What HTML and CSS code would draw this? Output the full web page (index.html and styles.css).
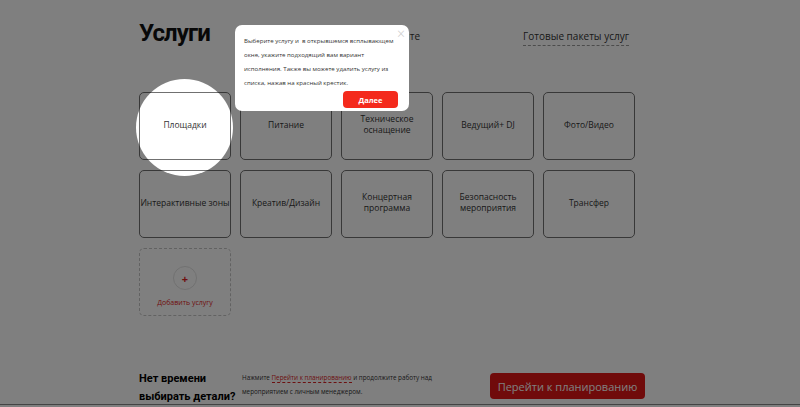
FILE: index.html
```html
<!DOCTYPE html>
<html lang="ru">
<head>
<meta charset="utf-8">
<link rel="stylesheet" href="styles.css">
</head>
<body>
<div class="page">
  <header class="header">
    <h1 class="title">Услуги</h1>
    <nav class="tabs">
      <span class="tab">Выбрать на сайте</span>
      <span class="tab tab-dashed">Готовые пакеты услуг</span>
    </nav>
  </header>
  <section class="grid">
    <div class="card">Площадки</div>
    <div class="card">Питание</div>
    <div class="card">Техническое<br>оснащение</div>
    <div class="card">Ведущий+ DJ</div>
    <div class="card">Фото/Видео</div>
    <div class="card">Интерактивные зоны</div>
    <div class="card">Креатив/Дизайн</div>
    <div class="card">Концертная<br>программа</div>
    <div class="card">Безопасность<br>мероприятия</div>
    <div class="card">Трансфер</div>
    <div class="card card-add">
      <span class="plus">+</span>
      <span class="add-text">Добавить услугу</span>
    </div>
  </section>
  <footer class="footer">
    <div class="question">Нет времени<br>выбирать детали?</div>
    <p class="hint">Нажмите <a class="link">Перейти к планированию</a> и продолжите работу над мероприятием с личным менеджером.</p>
    <button class="cta">Перейти к планированию</button>
  </footer>
  <div class="bottom-line"></div>
</div>
<div class="spotlight"></div>
<div class="tooltip">
  <span class="close">×</span>
  <p class="tip-text">Выберите услугу и&nbsp; в открывшемся всплывающем окне, укажите подходящий вам вариант исполнения. Также вы можете удалить услугу из списка, нажав на красный крестик.</p>
  <div class="tip-actions"><button class="next">Далее</button></div>
</div>
</body>
</html>
```
FILE: styles.css
```css
* { box-sizing: border-box; }
html, body { margin: 0; padding: 0; }
body {
  width: 800px;
  height: 407px;
  overflow: hidden;
  background: #fff;
  font-family: "Open Sans", "Noto Sans", sans-serif;
  color: #3a3a3a;
  position: relative;
}
.page {
  padding: 17px 0 0 139px;
  width: 800px;
  height: 407px;
}
.header {
  display: flex;
  align-items: flex-start;
  width: 490px;
  height: 75px;
}
.title {
  margin: 0;
  font-family: Roboto, sans-serif;
  font-weight: 700;
  font-size: 24px;
  letter-spacing: -0.9px;
  color: #111;
  line-height: 32px;
}
.tabs {
  display: flex;
  margin-left: auto;
  gap: 103px;
  padding-top: 12px;
  font-size: 10px;
  color: #333;
}
.tab { line-height: 15px; white-space: nowrap; }
.tab-dashed {
  border-bottom: 1px dashed #999;
  padding-bottom: 1px;
}
.grid {
  display: grid;
  grid-template-columns: repeat(5, 92px);
  grid-auto-rows: 68px;
  gap: 10px 9px;
}
.card {
  border: 1px solid #707070;
  border-radius: 5px;
  display: flex;
  align-items: center;
  justify-content: center;
  text-align: center;
  font-size: 8.5px;
  line-height: 11px;
  color: #333;
  white-space: nowrap;
  padding-bottom: 4px;
}
.card-add {
  border: 1px dashed #c4c4c4;
  flex-direction: column;
  gap: 7px;
  padding: 10px 0 0 0;
}
.plus {
  width: 24px;
  height: 24px;
  border-radius: 50%;
  border: 1px solid #e2e2e2;
  display: flex;
  align-items: center;
  justify-content: center;
  color: #e02020;
  font-size: 11px;
  font-weight: 700;
}
.add-text { color: #e02020; font-size: 7px; }
.footer {
  display: flex;
  align-items: flex-start;
  margin-top: 54px;
  width: 506px;
}
.question {
  width: 103px;
  font-family: Roboto, sans-serif;
  font-weight: 700;
  font-size: 11px;
  line-height: 18px;
  color: #000;
}
.hint {
  margin: 1px 0 0 0;
  width: 225px;
  font-size: 6.3px;
  line-height: 14px;
  color: #333;
}
.link {
  color: #d92323;
  border-bottom: 1px dashed #d92323;
}
.cta {
  margin-left: auto;
  margin-top: 3px;
  width: 155px;
  height: 26px;
  border: 0;
  border-radius: 4px;
  background: #e01616;
  color: #fff;
  font-family: "Open Sans", sans-serif;
  font-size: 11px;
}
.bottom-line {
  position: absolute;
  left: 0;
  right: 0;
  top: 404px;
  border-top: 1px solid #888;
}
.spotlight {
  position: absolute;
  left: 136px;
  top: 79px;
  width: 97px;
  height: 97px;
  border-radius: 50%;
  box-shadow: 0 0 0 1200px rgba(0, 0, 0, 0.5);
}
.tooltip {
  position: absolute;
  left: 235px;
  top: 25px;
  width: 174px;
  height: 86px;
  background: #fff;
  border-radius: 7px;
  padding: 9px 6px 0 9px;
}
.close {
  position: absolute;
  right: 4px;
  top: -1px;
  font-size: 14px;
  color: #ccc;
  font-weight: 300;
}
.tip-text {
  margin: 0;
  font-size: 6.1px;
  line-height: 14px;
  color: #333;
}
.tip-actions {
  display: flex;
  justify-content: flex-end;
  margin-top: 1px;
  padding-right: 5px;
}
.next {
  width: 55px;
  height: 17px;
  border: 0;
  border-radius: 4px;
  background: #f42a1c;
  color: #fff;
  font-family: "Open Sans", sans-serif;
  font-weight: 700;
  font-size: 7.5px;
}
```
